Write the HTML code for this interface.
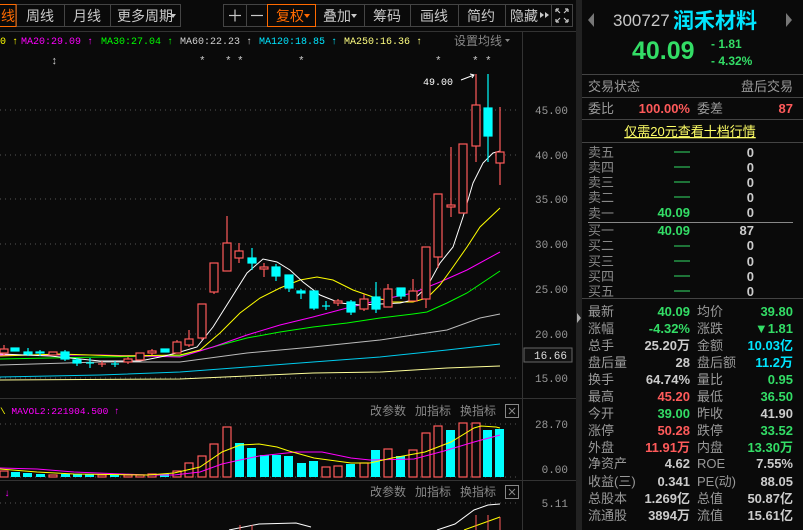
<!DOCTYPE html>
<html><head><meta charset="utf-8"><style>
html,body{margin:0;padding:0;background:#0a0a0a;width:803px;height:530px;overflow:hidden}
svg{display:block}
.cn{font-family:"Liberation Sans","Noto Sans CJK SC",sans-serif}
.mo{font-family:"Liberation Mono","DejaVu Sans Mono",monospace}
.b{font-family:"Liberation Sans","Noto Sans CJK SC",sans-serif;font-weight:bold}
</style></head><body>
<svg width="803" height="530" viewBox="0 0 803 530" xmlns="http://www.w3.org/2000/svg">
<rect width="803" height="530" fill="#0a0a0a"/>
<!-- toolbar -->
<g fill="none" stroke="#444" stroke-width="1">
<rect x="16.5" y="4.5" width="164" height="22"/>
<line x1="64.5" y1="4" x2="64.5" y2="27"/><line x1="110.5" y1="4" x2="110.5" y2="27"/>
<rect x="223.5" y="4.5" width="349" height="22"/>
<line x1="246.5" y1="4" x2="246.5" y2="27"/><line x1="364.5" y1="4" x2="364.5" y2="27"/>
<line x1="410.5" y1="4" x2="410.5" y2="27"/><line x1="458.5" y1="4" x2="458.5" y2="27"/><line x1="505.5" y1="4" x2="505.5" y2="27"/><line x1="551.5" y1="4" x2="551.5" y2="27"/>
</g>
<rect x="-5" y="4.5" width="21" height="22" fill="none" stroke="#ff6a00"/>
<rect x="267.5" y="4.5" width="48" height="22" fill="none" stroke="#ff6a00"/>
<g class="cn" font-size="14" fill="#c8c8c8">
<text x="1" y="21" fill="#ff6a00">线</text>
<text x="26" y="21">周线</text><text x="73" y="21">月线</text><text x="117" y="21">更多周期</text>
<text x="276" y="21" fill="#ff6a00">复权</text>
<text x="323" y="21">叠加</text><text x="373" y="21">筹码</text><text x="420" y="21">画线</text><text x="467" y="21">简约</text><text x="510" y="21">隐藏</text>
</g>
<g fill="#c8c8c8"><path d="M170 14h6l-3 4z"/><path d="M351 14h6l-3 4z"/><path d="M540 12l4 3-4 3zM545 12l4 3-4 3z"/></g>
<path d="M304 14h6l-3 4z" fill="#ff6a00"/>
<g stroke="#c8c8c8" stroke-width="1.2"><line x1="229" y1="15.5" x2="241" y2="15.5"/><line x1="235" y1="9.5" x2="235" y2="21.5"/><line x1="251" y1="15.5" x2="263" y2="15.5"/>
<path d="M556 9l4 4M556 9v3M556 9h3M568 9l-4 4M568 9v3M568 9h-3M556 22l4-4M556 22v-3M556 22h3M568 22l-4-4M568 22v-3M568 22h-3" fill="none"/></g>
<line x1="0" y1="31.5" x2="577" y2="31.5" stroke="#333"/>
<!-- MA header -->
<g class="mo" font-size="10">
<text x="0" y="44" fill="#ffff00">0 ↑</text>
<text x="21" y="44" fill="#ff00ff">MA20:29.09 ↑</text>
<text x="101" y="44" fill="#00ff00">MA30:27.04 ↑</text>
<text x="180" y="44" fill="#d0d0d0">MA60:22.23 ↑</text>
<text x="259" y="44" fill="#00e5ff">MA120:18.85 ↑</text>
<text x="344" y="44" fill="#ffff80">MA250:16.36 ↑</text>
</g>
<text x="454" y="45" class="cn" font-size="12" fill="#888">设置均线</text><path d="M505 39h5l-2.5 3z" fill="#888"/>
<line x1="522.5" y1="31" x2="522.5" y2="530" stroke="#333"/>
<!-- stars -->
<g class="mo" font-size="11" fill="#ccc"><text x="51" y="64">↕</text>
<text x="199" y="64">*</text><text x="225" y="64">*</text><text x="237" y="64">*</text><text x="298" y="64">*</text><text x="435" y="64">*</text><text x="472" y="64">*</text><text x="485" y="64">*</text></g>
<text x="423" y="85" class="mo" font-size="10" fill="#fff">49.00</text>
<path d="M461 80l13-5M470 74l4 1-2 3" stroke="#fff" fill="none"/>
<!-- grid -->
<g stroke="#555" stroke-dasharray="1 4"><line x1="0" y1="110" x2="520" y2="110"/><line x1="0" y1="155" x2="520" y2="155"/><line x1="0" y1="199" x2="520" y2="199"/><line x1="0" y1="244" x2="520" y2="244"/><line x1="0" y1="289" x2="520" y2="289"/><line x1="0" y1="334" x2="520" y2="334"/><line x1="0" y1="378" x2="520" y2="378"/>
<line x1="0" y1="424" x2="520" y2="424"/><line x1="0" y1="477" x2="520" y2="477"/><line x1="0" y1="503" x2="520" y2="503"/></g>
<g class="mo" font-size="11" fill="#999" text-anchor="end"><text x="568" y="114">45.00</text><text x="568" y="159">40.00</text><text x="568" y="203">35.00</text><text x="568" y="248">30.00</text><text x="568" y="293">25.00</text><text x="568" y="338">20.00</text><text x="568" y="382">15.00</text>
<text x="568" y="428">28.70</text><text x="568" y="473">0.00</text><text x="568" y="507">5.11</text></g>
<rect x="524" y="348" width="48" height="14" fill="#111" stroke="#666"/><text x="567" y="359" class="mo" font-size="11" fill="#ddd" text-anchor="end">16.66</text>
<!-- MA lines -->
<g fill="none" stroke-width="1">
<polyline stroke="#ffff99" points="0,380 180,379 247,376 313,373 380,372 447,368 500,366"/>
<polyline stroke="#00ccee" points="0,377 100,375 180,372 247,367 313,362 380,357 447,350 500,344"/>
<polyline stroke="#bbbbbb" points="0,365 100,362 180,362 247,353 313,347 380,340 447,330 480,318 500,314"/>
<polyline stroke="#00ff00" points="0,359 100,357 180,356 213,347 247,338 280,332 313,327 347,323 380,318 413,314 427,312 447,303 467,293 500,271"/>
<polyline stroke="#ff00ff" points="0,355 100,355 180,357 213,347 247,335 280,325 313,317 347,308 380,300 413,293 440,282 467,270 500,252"/>
<polyline stroke="#ffff00" points="0,356 60,354 120,356 180,355 200,350 220,333 240,313 260,298 280,288 300,280 317,277 333,280 353,290 373,297 393,302 413,302 427,298 440,285 453,267 467,247 480,227 500,208"/>
<polyline stroke="#ffffff" points="0,354 50,356 100,361 140,361 165,356 180,352 197,347 213,327 230,300 247,273 263,259 277,262 290,270 303,282 320,295 340,303 360,305 380,304 400,303 413,300 427,287 440,263 453,247 463,217 473,183 483,163 493,153 500,151"/>
</g>
<!-- candles -->
<g stroke-width="1.2">
<g stroke="#ff5a5a" fill="#0a0a0a">
<line x1="4" y1="345" x2="4" y2="355"/><rect x="0" y="349" width="8" height="4"/>
<rect x="49" y="352" width="8" height="3"/>
<line x1="102" y1="361" x2="102" y2="367"/><line x1="98" y1="364" x2="106" y2="364"/>
<line x1="128" y1="357" x2="128" y2="364"/><rect x="124" y="359" width="8" height="3"/>
<rect x="136" y="353" width="8" height="7"/>
<line x1="152" y1="349" x2="152" y2="355"/><rect x="148" y="351" width="8" height="2"/>
<line x1="177" y1="340" x2="177" y2="353"/><rect x="173" y="342" width="8" height="11"/>
<line x1="189" y1="330" x2="189" y2="347"/><rect x="185" y="339" width="8" height="6"/>
<line x1="202" y1="304" x2="202" y2="340"/><rect x="198" y="304" width="8" height="34"/>
<line x1="214" y1="263" x2="214" y2="294"/><rect x="210" y="263" width="8" height="29"/>
<line x1="227" y1="216" x2="227" y2="271"/><rect x="223" y="243" width="8" height="28"/>
<line x1="239" y1="243" x2="239" y2="263"/><rect x="235" y="251" width="8" height="7"/>
<line x1="264" y1="263" x2="264" y2="277"/><rect x="260" y="267" width="8" height="2"/>
<line x1="338" y1="299" x2="338" y2="306"/><rect x="334" y="301" width="8" height="2"/>
<line x1="364" y1="294" x2="364" y2="311"/><rect x="360" y="299" width="8" height="10"/>
<line x1="388" y1="284" x2="388" y2="307"/><rect x="384" y="289" width="8" height="18"/>
<line x1="413" y1="279" x2="413" y2="301"/><rect x="409" y="291" width="8" height="10"/>
<line x1="426" y1="247" x2="426" y2="308"/><rect x="422" y="247" width="8" height="52"/>
<line x1="438" y1="194" x2="438" y2="268"/><rect x="434" y="194" width="8" height="63"/>
<line x1="451" y1="147" x2="451" y2="217"/><rect x="447" y="205" width="8" height="2"/>
<rect x="459" y="144" width="8" height="69"/>
<line x1="476" y1="74" x2="476" y2="162"/><rect x="472" y="105" width="8" height="41"/>
<line x1="500" y1="107" x2="500" y2="185"/><rect x="496" y="152" width="8" height="11"/>
</g>
<g stroke="#00ffff" fill="#00ffff">
<rect x="11" y="348" width="8" height="3"/>
<line x1="28" y1="348" x2="28" y2="356"/><rect x="24" y="352" width="8" height="2"/>
<line x1="40" y1="350" x2="40" y2="356"/><rect x="36" y="352" width="8" height="1"/>
<line x1="65" y1="350" x2="65" y2="361"/><rect x="61" y="352" width="8" height="7"/>
<line x1="77" y1="358" x2="77" y2="366"/><rect x="73" y="360" width="8" height="3"/>
<line x1="90" y1="358" x2="90" y2="368"/><line x1="86" y1="363" x2="94" y2="363"/>
<line x1="115" y1="361" x2="115" y2="367"/><line x1="111" y1="364" x2="119" y2="364"/>
<rect x="161" y="349" width="8" height="3"/>
<line x1="252" y1="248" x2="252" y2="270"/><rect x="248" y="258" width="8" height="5"/>
<line x1="276" y1="264" x2="276" y2="281"/><rect x="272" y="267" width="8" height="9"/>
<line x1="289" y1="275" x2="289" y2="292"/><rect x="285" y="275" width="8" height="13"/>
<line x1="301" y1="289" x2="301" y2="299"/><rect x="297" y="291" width="8" height="2"/>
<line x1="314" y1="291" x2="314" y2="310"/><rect x="310" y="291" width="8" height="17"/>
<line x1="326" y1="301" x2="326" y2="310"/><line x1="322" y1="306" x2="330" y2="306"/>
<line x1="351" y1="300" x2="351" y2="315"/><rect x="347" y="302" width="8" height="10"/>
<line x1="376" y1="282" x2="376" y2="313"/><rect x="372" y="297" width="8" height="12"/>
<line x1="401" y1="288" x2="401" y2="299"/><rect x="397" y="288" width="8" height="8"/>
<line x1="488" y1="74" x2="488" y2="162"/><rect x="484" y="108" width="8" height="28"/>
</g></g>
<!-- volume panel -->
<line x1="0" y1="398.5" x2="577" y2="398.5" stroke="#333"/>
<text x="0" y="414" class="mo" font-size="9.5" fill="#ff00ff"><tspan fill="#ffff00">\</tspan> MAVOL2:221904.500 ↑</text>
<g class="cn" font-size="12" fill="#888"><text x="370" y="415">改参数</text><text x="415" y="415">加指标</text><text x="460" y="415">换指标</text>
<text x="370" y="496">改参数</text><text x="415" y="496">加指标</text><text x="460" y="496">换指标</text></g>
<g fill="none" stroke="#888"><rect x="505.5" y="404.5" width="13" height="13"/><path d="M509 408l6 6M515 408l-6 6"/><rect x="505.5" y="485.5" width="13" height="13"/><path d="M509 489l6 6M515 489l-6 6"/></g>
<g stroke-width="1.2">
<g stroke="#ff5a5a" fill="#0a0a0a">
<rect x="0" y="471" width="8" height="6"/><rect x="49" y="475" width="8" height="2"/><rect x="98" y="475" width="8" height="2"/><rect x="124" y="475" width="8" height="2"/><rect x="136" y="475" width="8" height="2"/><rect x="148" y="474" width="8" height="3"/>
<rect x="173" y="471" width="8" height="6"/><rect x="185" y="463" width="8" height="14"/><rect x="198" y="456" width="8" height="21"/><rect x="210" y="444" width="8" height="33"/><rect x="223" y="427" width="8" height="50"/>
<rect x="322" y="467" width="8" height="10"/><rect x="334" y="466" width="8" height="11"/><rect x="360" y="463" width="8" height="14"/><rect x="384" y="449" width="8" height="28"/><rect x="409" y="450" width="8" height="27"/><rect x="422" y="433" width="8" height="44"/><rect x="434" y="426" width="8" height="51"/><rect x="459" y="423" width="8" height="54"/><rect x="472" y="423" width="8" height="54"/>
</g>
<g fill="#00ffff" stroke="none">
<rect x="11" y="472" width="9" height="5"/><rect x="23" y="473" width="9" height="4"/><rect x="36" y="474" width="9" height="3"/><rect x="61" y="474" width="9" height="3"/><rect x="73" y="474" width="9" height="3"/><rect x="85" y="474" width="9" height="3"/><rect x="110" y="475" width="9" height="2"/><rect x="160" y="474" width="9" height="3"/>
<rect x="235" y="443" width="9" height="34"/><rect x="247" y="448" width="9" height="29"/><rect x="260" y="455" width="9" height="22"/><rect x="272" y="455" width="9" height="22"/><rect x="284" y="456" width="9" height="21"/><rect x="297" y="463" width="9" height="14"/><rect x="309" y="461" width="9" height="16"/><rect x="346" y="464" width="9" height="13"/><rect x="371" y="450" width="9" height="27"/><rect x="396" y="456" width="9" height="21"/><rect x="446" y="430" width="9" height="47"/><rect x="483" y="430" width="9" height="47"/><rect x="495" y="429" width="9" height="48"/>
</g></g>
<g fill="none" stroke-width="1">
<polyline stroke="#ff00ff" points="0,468 37,469 74,472 148,475 174,475 200,472 222,464 240,460 259,456 296,452 322,452 351,458 370,460 414,459 444,451 474,442 500,435"/>
<polyline stroke="#ffff00" points="0,469 37,472 74,474 148,475 174,473 200,467 222,452 240,445 259,444 277,447 289,451 314,458 351,463 370,463 392,458 425,452 451,442 474,428 481,426 496,427 500,428"/>
</g>
<!-- third panel -->
<line x1="0" y1="480.5" x2="577" y2="480.5" stroke="#333"/>
<text x="4" y="496" class="mo" font-size="10" fill="#ff00ff">↓</text>
<polyline fill="none" stroke="#fff" points="229,530 259,524 296,523 311,527"/>
<polyline fill="none" stroke="#fff" points="437,530 455,524 474,510 488,505 500,504"/>
<polyline fill="none" stroke="#ff0" points="464,530 500,517"/>
<g stroke="#ff5a5a"><line x1="476" y1="515" x2="476" y2="530"/><line x1="488" y1="515" x2="488" y2="530"/><line x1="500" y1="517" x2="500" y2="530"/><line x1="240" y1="525" x2="240" y2="530"/><line x1="252" y1="525" x2="252" y2="530"/></g>
<!-- divider bar -->
<rect x="576" y="0" width="6" height="530" fill="#222"/>
<path d="M577 313l4 5-4 5z" fill="#aaa"/>
<!-- right panel -->
<g stroke="#444"><line x1="582" y1="74.5" x2="803" y2="74.5"/><line x1="582" y1="97.5" x2="803" y2="97.5"/><line x1="582" y1="119.5" x2="803" y2="119.5"/><line x1="582" y1="142.5" x2="803" y2="142.5"/><line x1="582" y1="298.5" x2="803" y2="298.5"/></g>
<line x1="588" y1="222.5" x2="793" y2="222.5" stroke="#888"/>
<path d="M594 13l-6 7 6 7z" fill="#777"/><path d="M786 13l6 7-6 7z" fill="#777"/>
<text x="613" y="26" class="cn" font-size="17" fill="#c8c8c8">300727</text>
<text x="673" y="28" class="cn" font-size="21" font-weight="bold" fill="#00e5ff">润禾材料</text>
<text x="632" y="59" class="b" font-size="25" fill="#33dd66">40.09</text>
<text x="711" y="48" class="b" font-size="12" fill="#33dd66">- 1.81</text>
<text x="711" y="65" class="b" font-size="12" fill="#33dd66">- 4.32%</text>
<g class="cn" font-size="13" fill="#999">
<text x="588" y="91">交易状态</text><text x="793" y="91" text-anchor="end">盘后交易</text>
<text x="588" y="113">委比</text><text x="697" y="113">委差</text>
</g>
<text x="690" y="113" class="b" font-size="13" fill="#ff5a5a" text-anchor="end">100.00%</text>
<text x="793" y="113" class="b" font-size="13" fill="#ff5a5a" text-anchor="end">87</text>
<text x="690" y="136" class="cn" font-size="13" fill="#ffff66" text-anchor="middle" text-decoration="underline">仅需20元查看十档行情</text>
<g class="cn" font-size="13" fill="#888">
<text x="588" y="157">卖五</text><text x="588" y="172">卖四</text><text x="588" y="187">卖三</text><text x="588" y="202">卖二</text><text x="588" y="218">卖一</text>
<text x="588" y="235">买一</text><text x="588" y="250">买二</text><text x="588" y="266">买三</text><text x="588" y="281">买四</text><text x="588" y="296">买五</text>
</g>
<g stroke="#33dd66"><line x1="674" y1="152" x2="690" y2="152"/><line x1="674" y1="167" x2="690" y2="167"/><line x1="674" y1="182" x2="690" y2="182"/><line x1="674" y1="197" x2="690" y2="197"/><line x1="674" y1="246" x2="690" y2="246"/><line x1="674" y1="261" x2="690" y2="261"/><line x1="674" y1="276" x2="690" y2="276"/><line x1="674" y1="291" x2="690" y2="291"/></g>
<g class="b" font-size="13" text-anchor="end">
<text x="690" y="217" fill="#33dd66">40.09</text><text x="690" y="235" fill="#33dd66">40.09</text>
<g fill="#ccc"><text x="754" y="157">0</text><text x="754" y="172">0</text><text x="754" y="187">0</text><text x="754" y="202">0</text><text x="754" y="217">0</text><text x="754" y="235">87</text><text x="754" y="250">0</text><text x="754" y="266">0</text><text x="754" y="281">0</text><text x="754" y="296">0</text></g>
</g>
<g class="cn" font-size="13" fill="#999">
<text x="588" y="316">最新</text><text x="588" y="333">涨幅</text><text x="588" y="350">总手</text><text x="588" y="367">盘后量</text><text x="588" y="384">换手</text><text x="588" y="401">最高</text><text x="588" y="418">今开</text><text x="588" y="435">涨停</text><text x="588" y="452">外盘</text><text x="588" y="468">净资产</text><text x="588" y="486">收益(三)</text><text x="588" y="503">总股本</text><text x="588" y="520">流通股</text>
<text x="697" y="316">均价</text><text x="697" y="333">涨跌</text><text x="697" y="350">金额</text><text x="697" y="367">盘后额</text><text x="697" y="384">量比</text><text x="697" y="401">最低</text><text x="697" y="418">昨收</text><text x="697" y="435">跌停</text><text x="697" y="452">内盘</text><text x="697" y="468">ROE</text><text x="697" y="486">PE(动)</text><text x="697" y="503">总值</text><text x="697" y="520">流值</text>
</g>
<g class="b" font-size="13" text-anchor="end">
<text x="690" y="316" fill="#33dd66">40.09</text><text x="690" y="333" fill="#33dd66">-4.32%</text><text x="690" y="350" fill="#ccc">25.20万</text><text x="690" y="367" fill="#ccc">28</text><text x="690" y="384" fill="#ccc">64.74%</text><text x="690" y="401" fill="#ff5a5a">45.20</text><text x="690" y="418" fill="#33dd66">39.00</text><text x="690" y="435" fill="#ff5a5a">50.28</text><text x="690" y="452" fill="#ff5a5a">11.91万</text><text x="690" y="468" fill="#ccc">4.62</text><text x="690" y="486" fill="#ccc">0.341</text><text x="690" y="503" fill="#ccc">1.269亿</text><text x="690" y="520" fill="#ccc">3894万</text>
<text x="793" y="316" fill="#33dd66">39.80</text><text x="793" y="333" fill="#33dd66">▼1.81</text><text x="793" y="350" fill="#00e5ff">10.03亿</text><text x="793" y="367" fill="#00e5ff">11.2万</text><text x="793" y="384" fill="#33dd66">0.95</text><text x="793" y="401" fill="#33dd66">36.50</text><text x="793" y="418" fill="#ccc">41.90</text><text x="793" y="435" fill="#33dd66">33.52</text><text x="793" y="452" fill="#33dd66">13.30万</text><text x="793" y="468" fill="#ccc">7.55%</text><text x="793" y="486" fill="#ccc">88.05</text><text x="793" y="503" fill="#ccc">50.87亿</text><text x="793" y="520" fill="#ccc">15.61亿</text>
</g>
</svg>
</body></html>
